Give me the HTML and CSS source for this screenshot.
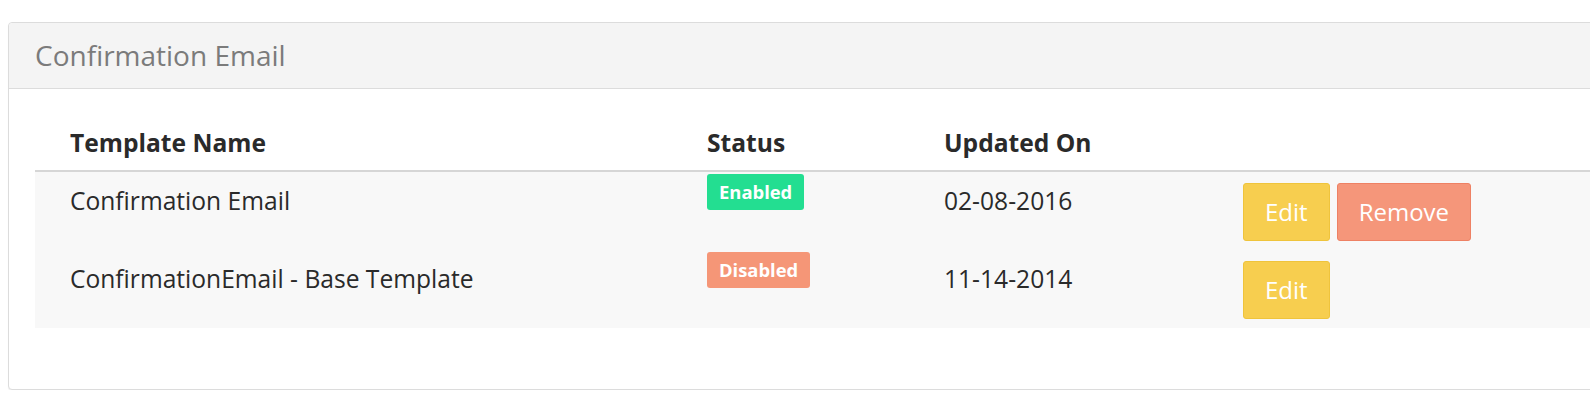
FILE: index.html
```html
<!DOCTYPE html>
<html lang="en">
<head>
<meta charset="utf-8">
<title>Confirmation Email</title>
<link rel="stylesheet" href="styles.css">
</head>
<body>
<div class="panel">
  <div class="panel-heading">Confirmation Email</div>
  <div class="panel-body">
    <table class="templates">
      <colgroup>
        <col class="c-name"><col class="c-status"><col class="c-date"><col class="c-actions">
      </colgroup>
      <thead>
        <tr><th>Template Name</th><th>Status</th><th>Updated On</th><th></th></tr>
      </thead>
      <tbody>
        <tr>
          <td>Confirmation Email</td>
          <td class="status"><span class="badge badge-on">Enabled</span></td>
          <td>02-08-2016</td>
          <td class="actions"><button class="btn btn-edit">Edit</button><button class="btn btn-remove">Remove</button></td>
        </tr>
        <tr>
          <td>ConfirmationEmail - Base Template</td>
          <td class="status"><span class="badge badge-off">Disabled</span></td>
          <td>11-14-2014</td>
          <td class="actions"><button class="btn btn-edit">Edit</button></td>
        </tr>
      </tbody>
    </table>
  </div>
</div>
</body>
</html>
```
FILE: styles.css
```css
html, body {
  margin: 0;
  padding: 0;
  background: #ffffff;
  overflow: hidden;
}
body {
  font-family: "Open Sans", "Liberation Sans", sans-serif;
  color: #2a2a2a;
  padding: 22px 0 0 8px;
}
.panel {
  width: 1700px;
  border: 1px solid #dcdcdc;
  border-radius: 4px;
  box-shadow: 0 1px 1px rgba(0, 0, 0, 0.06);
  background: #fff;
}
.panel-heading {
  background: #f4f4f4;
  border-bottom: 1px solid #dcdcdc;
  border-radius: 4px 4px 0 0;
  height: 66px;
  box-sizing: border-box;
  padding: 13px 26px 0;
  font-size: 28px;
  line-height: 38px;
  color: #7b7b7b;
}
.panel-body {
  padding: 26px 0 61px 26px;
}
.templates {
  border-collapse: separate;
  border-spacing: 0;
  table-layout: fixed;
  width: 1674px;
  font-size: 24.6px;
  line-height: 34px;
}
.c-name { width: 637px; }
.c-status { width: 237px; }
.c-date { width: 299px; }
.templates th {
  text-align: left;
  font-weight: 700;
  padding: 11px 0 10px 35px;
  border-bottom: 2px solid #d6d6d6;
  vertical-align: top;
}
.templates td {
  background: #f8f8f8;
  padding: 12px 0 0 35px;
  vertical-align: top;
}
.templates td.status { padding-top: 1px; }
.templates td.actions { padding: 11px 0 9px 35px; }
.badge {
  display: inline-block;
  height: 36px;
  line-height: 36px;
  padding: 0 12px;
  border-radius: 3px;
  font-size: 18.4px;
  font-weight: 700;
  color: #fff;
}
.badge-on { background: #23de91; }
.badge-off { background: #f59677; }
.btn {
  display: inline-block;
  font-family: inherit;
  font-size: 24px;
  line-height: 34px;
  height: 58px;
  padding: 11px 21px;
  border-radius: 3px;
  color: #fff;
  border: 1px solid transparent;
  margin: 0 7px 0 0;
  vertical-align: top;
}
.btn-edit { background: #f7ce4f; border-color: #efc43c; }
.btn-remove { background: #f5967a; border-color: #ee8164; }
```
